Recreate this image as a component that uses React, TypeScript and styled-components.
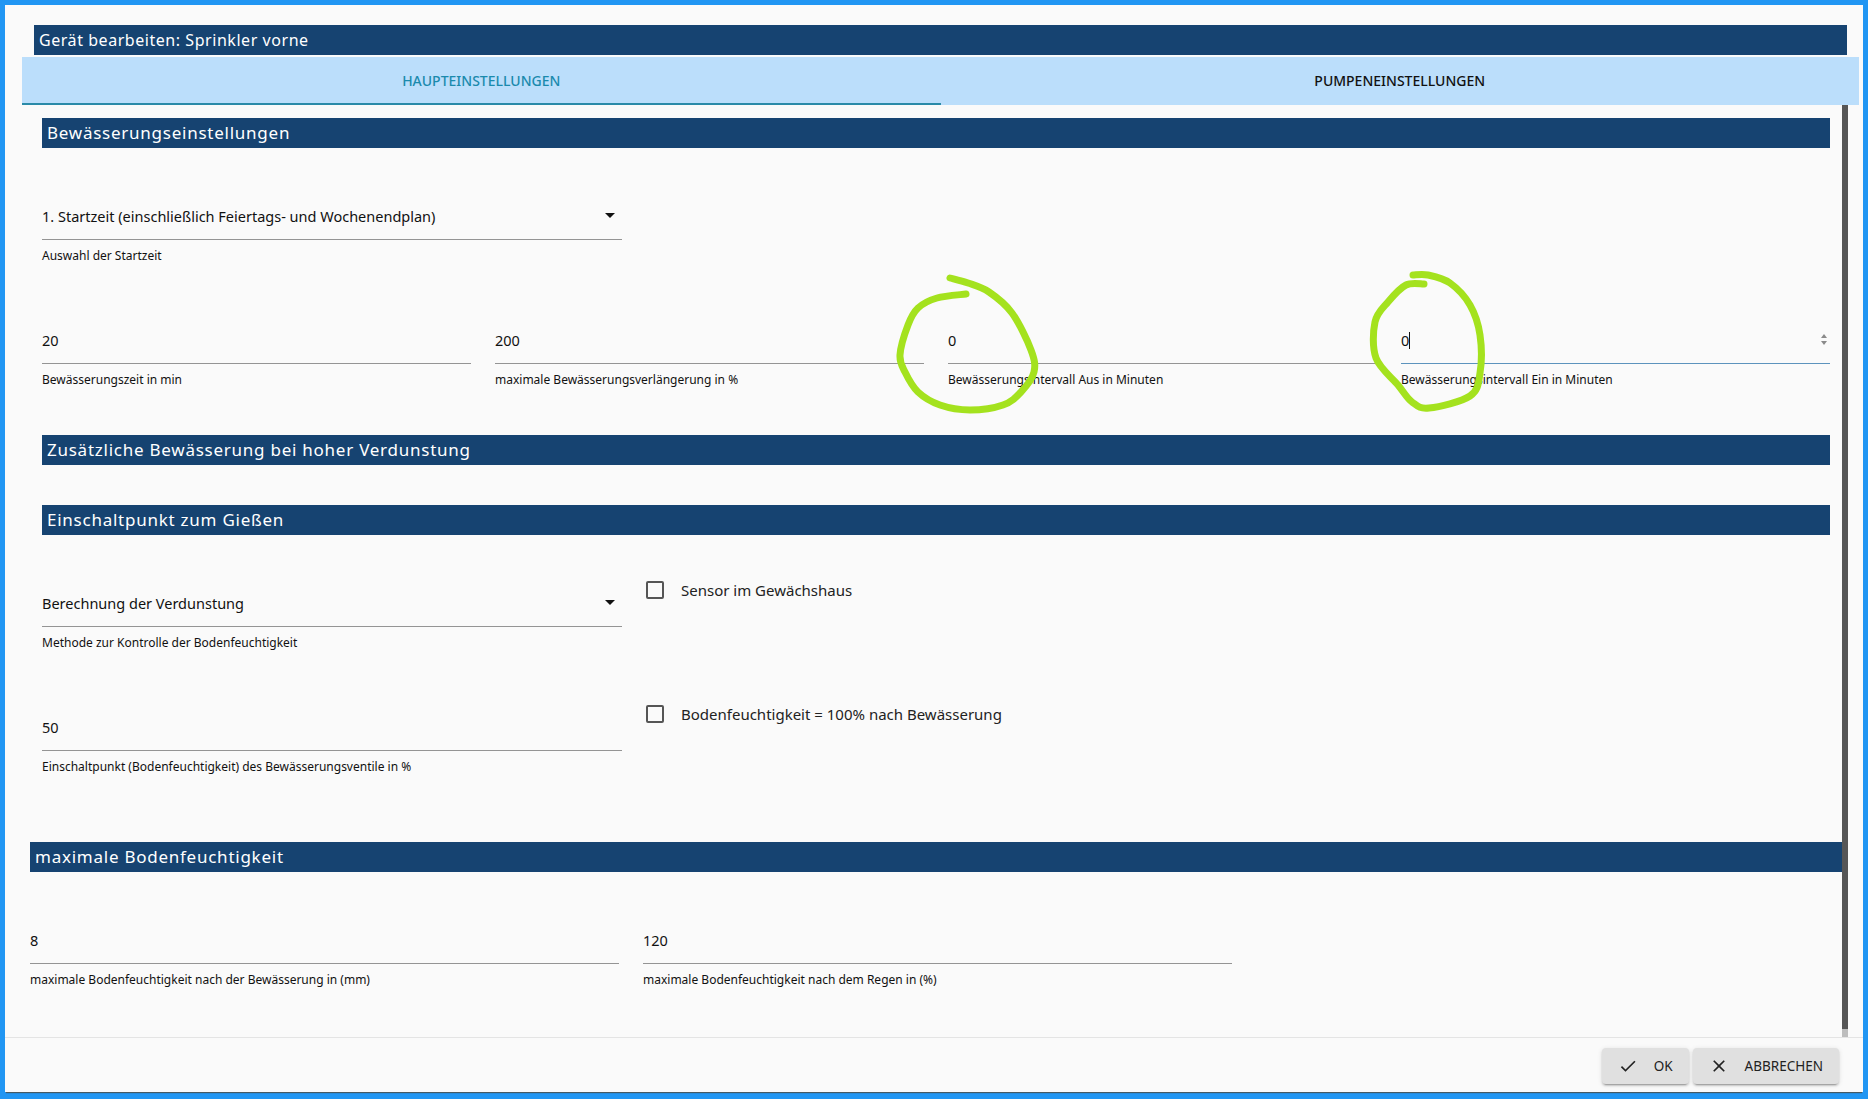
import React from 'react';
import styled, { createGlobalStyle } from 'styled-components';

const GlobalStyle = createGlobalStyle`
  html, body, #root {
    height: 100%;
    margin: 0;
  }
  body {
    font-family: "Noto Sans", "Liberation Sans", sans-serif;
    overflow: hidden;
  }
`;

const Page = styled.div`
  position: relative;
  box-sizing: border-box;
  height: 1099px;
  padding: 5px 5px 7px 5px;
  background: #2196f3;
`;

const Dialog = styled.div`
  display: flex;
  flex-direction: column;
  height: 100%;
  background: #fafafa;
  box-shadow: 0 2px 1px -1px #455a64;
`;

const TitleBar = styled.div`
  height: 30px;
  margin: 20px 16px 0 29px;
  padding-left: 5px;
  background: #164371;
  color: #fff;
  font-size: 16px;
  line-height: 30px;
  letter-spacing: 0.55px;
`;

const Tabs = styled.div`
  display: flex;
  height: 48px;
  margin: 2px 4px 0 17px;
  background: #bbdefb;
`;

const Tab = styled.div<{ $active?: boolean }>`
  flex: 1;
  display: flex;
  align-items: center;
  justify-content: center;
  box-sizing: border-box;
  font-size: 14px;
  font-weight: 500;
  color: ${(p) => (p.$active ? '#1a8aad' : '#111')};
  border-bottom: 2px solid ${(p) => (p.$active ? '#2a8aa8' : 'transparent')};
`;

const Body = styled.div`
  flex: 1;
  display: flex;
  min-height: 0;
  margin-left: 17px;
  margin-right: 15px;
`;

const Content = styled.div`
  flex: 1;
  min-width: 0;
  padding: 13px 12px 0 20px;
`;

const Scrollbar = styled.div`
  display: flex;
  flex-direction: column;
  width: 6px;
  background: #bdbdbd;
  padding-bottom: 8px;

  &::before {
    content: '';
    flex: 1;
    background: #565656;
  }
`;

const SectionHeader = styled.div<{ $gap?: number }>`
  height: 30px;
  margin-top: ${(p) => p.$gap ?? 0}px;
  padding-left: 5px;
  background: #164371;
  color: #fff;
  font-size: 17px;
  line-height: 30px;
  letter-spacing: 0.75px;
`;

const WideSection = styled.div`
  margin: 0 -12px;
`;

const FieldRow = styled.div<{ $columns: string; $gap: number }>`
  display: grid;
  grid-template-columns: ${(p) => p.$columns};
  column-gap: 24px;
  margin-top: ${(p) => p.$gap}px;
`;

const Field = styled.div`
  min-width: 0;
`;

const Value = styled.div<{ $focused?: boolean }>`
  display: flex;
  align-items: center;
  justify-content: space-between;
  height: 39px;
  box-sizing: content-box;
  padding-bottom: 0;
  border-bottom: 1px solid ${(p) => (p.$focused ? '#5c93bd' : '#949494')};
  font-size: 14.5px;
  color: #111;
`;

const ValueText = styled.span`
  display: inline-flex;
  align-items: center;
  height: 32px;
  margin-bottom: 7px;
`;

const Caret = styled.span`
  display: inline-block;
  width: 1px;
  height: 17px;
  background: #111;
`;

const Helper = styled.div`
  margin-top: 7px;
  font-size: 12px;
  line-height: 18px;
  color: #111;
  white-space: nowrap;
`;

const SelectArrow = styled.span`
  width: 0;
  height: 0;
  margin: 0 7px 8px 0;
  border-left: 5px solid transparent;
  border-right: 5px solid transparent;
  border-top: 5px solid #111;
`;

const Spinner = styled.span`
  display: flex;
  flex-direction: column;
  gap: 3px;
  margin: 0 3px 9px 0;

  &::before,
  &::after {
    content: '';
    width: 0;
    height: 0;
    border-left: 3px solid transparent;
    border-right: 3px solid transparent;
  }
  &::before {
    border-bottom: 4px solid #8a8a8a;
  }
  &::after {
    border-top: 4px solid #8a8a8a;
  }
`;

const CheckLabel = styled.label`
  display: flex;
  align-items: center;
  gap: 17px;
  height: 18px;
  margin-top: -6px;
  font-size: 15px;
  color: #222;
  white-space: nowrap;
`;

const CheckBox = styled.span`
  box-sizing: border-box;
  width: 18px;
  height: 18px;
  border: 2px solid #555;
  border-radius: 2px;
`;

const Footer = styled.div`
  display: flex;
  justify-content: flex-end;
  gap: 4px;
  height: 55px;
  box-sizing: border-box;
  padding: 10px 24px 0 0;
  border-top: 1px solid #e4e4e4;
`;

const ActionButton = styled.button`
  display: flex;
  align-items: center;
  gap: 16px;
  height: 36px;
  padding: 0 16px;
  border: 0;
  border-radius: 4px;
  background: #e0e0e0;
  color: #222;
  font-family: inherit;
  font-size: 13.5px;
  box-shadow: 0 3px 1px -2px rgba(0, 0, 0, 0.2), 0 2px 2px 0 rgba(0, 0, 0, 0.14), 0 1px 5px 0 rgba(0, 0, 0, 0.12);
`;

const Scribbles = styled.svg`
  position: absolute;
  top: 0;
  left: 0;
  pointer-events: none;
`;

type Point = [number, number];

const circleOne: Point[] = [
  [950, 278], [968, 283], [989, 292], [1012, 313], [1031, 350], [1034, 372], [1021, 392], [1003, 405],
  [970, 410], [940, 405], [918, 392], [905, 372], [900, 355], [908, 325], [918, 308], [937, 298], [966, 294],
];

const circleTwo: Point[] = [
  [1413, 275], [1428, 275], [1450, 283], [1470, 305], [1480, 335], [1480, 373], [1470, 396], [1429, 408],
  [1412, 402], [1398, 385], [1376, 358], [1375, 322], [1388, 302], [1406, 285], [1424, 284],
];

// smooth line through the hand drawn points
function smooth(points: Point[]): string {
  let d = `M${points[0][0]} ${points[0][1]}`;
  for (let i = 0; i < points.length - 1; i++) {
    const p0 = points[i - 1] || points[i];
    const p1 = points[i];
    const p2 = points[i + 1];
    const p3 = points[i + 2] || p2;
    const c1x = p1[0] + (p2[0] - p0[0]) / 6;
    const c1y = p1[1] + (p2[1] - p0[1]) / 6;
    const c2x = p2[0] - (p3[0] - p1[0]) / 6;
    const c2y = p2[1] - (p3[1] - p1[1]) / 6;
    d += ` C${c1x} ${c1y} ${c2x} ${c2y} ${p2[0]} ${p2[1]}`;
  }
  return d;
}

function InputField({ value, helper, focused }: { value: string; helper: string; focused?: boolean }): JSX.Element {
  return (
    <Field>
      <Value $focused={focused}>
        <ValueText>
          {value}
          {focused && <Caret />}
        </ValueText>
        {focused && <Spinner />}
      </Value>
      <Helper>{helper}</Helper>
    </Field>
  );
}

function SelectField({ value, helper }: { value: string; helper: string }): JSX.Element {
  return (
    <Field>
      <Value>
        <ValueText>{value}</ValueText>
        <SelectArrow />
      </Value>
      <Helper>{helper}</Helper>
    </Field>
  );
}

function App(): JSX.Element {
  return (
    <Page>
      <GlobalStyle />
      <Dialog>
        <TitleBar>Gerät bearbeiten: Sprinkler vorne</TitleBar>
        <Tabs>
          <Tab $active>HAUPTEINSTELLUNGEN</Tab>
          <Tab>PUMPENEINSTELLUNGEN</Tab>
        </Tabs>
        <Body>
          <Content>
            <SectionHeader>Bewässerungseinstellungen</SectionHeader>
            <FieldRow $columns="580px" $gap={52}>
              <SelectField value="1. Startzeit (einschließlich Feiertags- und Wochenendplan)" helper="Auswahl der Startzeit" />
            </FieldRow>
            <FieldRow $columns="repeat(4, 429px)" $gap={59}>
              <InputField value="20" helper="Bewässerungszeit in min" />
              <InputField value="200" helper="maximale Bewässerungsverlängerung in %" />
              <InputField value="0" helper="Bewässerungsintervall Aus in Minuten" />
              <InputField value="0" helper="Bewässerungsintervall Ein in Minuten" focused />
            </FieldRow>

            <SectionHeader $gap={46}>Zusätzliche Bewässerung bei hoher Verdunstung</SectionHeader>
            <SectionHeader $gap={40}>Einschaltpunkt zum Gießen</SectionHeader>
            <FieldRow $columns="580px 1fr" $gap={52}>
              <SelectField value="Berechnung der Verdunstung" helper="Methode zur Kontrolle der Bodenfeuchtigkeit" />
              <CheckLabel>
                <CheckBox />
                Sensor im Gewächshaus
              </CheckLabel>
            </FieldRow>
            <FieldRow $columns="580px 1fr" $gap={59}>
              <InputField value="50" helper="Einschaltpunkt (Bodenfeuchtigkeit) des Bewässerungsventile in %" />
              <CheckLabel>
                <CheckBox />
                Bodenfeuchtigkeit = 100% nach Bewässerung
              </CheckLabel>
            </FieldRow>

            <WideSection>
              <SectionHeader $gap={66}>maximale Bodenfeuchtigkeit</SectionHeader>
              <FieldRow $columns="589px 589px" $gap={52}>
                <InputField value="8" helper="maximale Bodenfeuchtigkeit nach der Bewässerung in (mm)" />
                <InputField value="120" helper="maximale Bodenfeuchtigkeit nach dem Regen in (%)" />
              </FieldRow>
            </WideSection>
          </Content>
          <Scrollbar />
        </Body>
        <Footer>
          <ActionButton>
            <svg width="20" height="20" viewBox="0 0 24 24" fill="#222">
              <path d="M9 16.17L4.83 12l-1.41 1.41L9 19 21 7l-1.41-1.41z" />
            </svg>
            OK
          </ActionButton>
          <ActionButton>
            <svg width="20" height="20" viewBox="0 0 24 24" fill="#222">
              <path d="M19 6.41L17.59 5 12 10.59 6.41 5 5 6.41 10.59 12 5 17.59 6.41 19 12 13.41 17.59 19 19 17.59 13.41 12z" />
            </svg>
            ABBRECHEN
          </ActionButton>
        </Footer>
      </Dialog>
      <Scribbles width="1868" height="1099" fill="none" stroke="#a4e21e" strokeWidth="7" strokeLinecap="round" strokeLinejoin="round">
        <path d={smooth(circleOne)} />
        <path d={smooth(circleTwo)} />
      </Scribbles>
    </Page>
  );
}

export default App;
